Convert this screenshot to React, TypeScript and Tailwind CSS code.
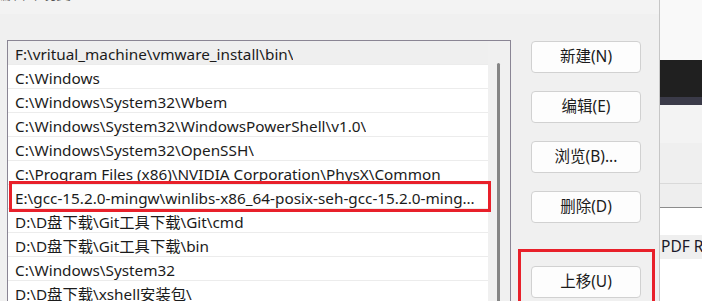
const paths = [
  'F:\\vritual_machine\\vmware_install\\bin\\',
  'C:\\Windows',
  'C:\\Windows\\System32\\Wbem',
  'C:\\Windows\\System32\\WindowsPowerShell\\v1.0\\',
  'C:\\Windows\\System32\\OpenSSH\\',
  'C:\\Program Files (x86)\\NVIDIA Corporation\\PhysX\\Common',
  'E:\\gcc-15.2.0-mingw\\winlibs-x86_64-posix-seh-gcc-15.2.0-mingw-w64msvcrt-r1\\mingw64\\bin',
  'D:\\D盘下载\\Git工具下载\\Git\\cmd',
  'D:\\D盘下载\\Git工具下载\\bin',
  'C:\\Windows\\System32',
  'D:\\D盘下载\\xshell安装包\\',
]

const buttons = ['新建(N)', '编辑(E)', '浏览(B)...', '删除(D)']

export default function App() {
  return (
    <div className="relative flex w-[702px] h-[301px] overflow-hidden bg-white font-['Noto_Sans','Noto_Sans_CJK_SC',sans-serif] text-[#1b1b1b]">

      {/* Dialog */}
      <div className="flex flex-col w-[660px] h-full shrink-0 bg-[#f0f0f0] border-r border-[#c6c6c6]">
        <div className="h-[14px] shrink-0 bg-[#f3f3f3] overflow-hidden flex justify-between">
          <div className="-mt-[18px] -ml-[4px] text-[15px] text-[#555]">编辑环境变量</div>
          <div className="-mt-[16px] mr-[14px] text-[13px] text-[#666]">✕</div>
        </div>

        <div className="flex shrink-0 pl-[7px] pt-[26px] gap-[20px]">
          {/* Path list */}
          <div className="flex w-[504px] h-[300px] border border-[#8a8594] bg-white shrink-0">
            <div className="w-[480px] flex flex-col">
              {paths.map((p, i) => (
                <div
                  key={i}
                  className={`h-[24px] shrink-0 flex items-center pl-[7px] pr-[8px] border-b border-[#ececec] text-[15.3px] whitespace-nowrap ${i === 0 ? 'bg-[#efefef]' : ''}`}
                >
                  <span className="truncate leading-[20px] pt-[2px]">{p}</span>
                </div>
              ))}
            </div>
            <div className="w-[22px] bg-[#f0f0f0] pt-[22px] pl-[9px]">
              <div className="w-[3px] h-full bg-[#858585] rounded-t-full" />
            </div>
          </div>

          {/* Buttons */}
          <div className="flex flex-col w-[110px] pt-[1px]">
            {buttons.map((b) => (
              <div
                key={b}
                className="h-[32px] shrink-0 mb-[18px] flex items-center justify-center rounded-[4px] border border-[#d1d1d1] bg-[#fdfdfd] text-[15.5px]"
              >
                {b}
              </div>
            ))}
            <div className="h-[32px] shrink-0 mt-[25px] flex items-center justify-center rounded-[4px] border border-[#d1d1d1] bg-[#fdfdfd] text-[15.5px]">
              上移(U)
            </div>
          </div>
        </div>
      </div>

      {/* Background window */}
      <div className="flex flex-col flex-1">
        <div className="h-[60px] shrink-0 bg-[#f9f9f9]" />
        <div className="h-[37px] shrink-0 bg-[#202020]" />
        <div className="h-[8px] shrink-0 bg-[#3a3a48]" />
        <div className="h-[38px] shrink-0 bg-[#f3f3f3]" />
        <div className="h-[41px] shrink-0 bg-[#efefef] border-b border-[#d9d9d9]" />
        <div className="h-[24px] shrink-0 bg-[#eeeeee] border-b border-[#8c8c8c]" />
        <div className="h-[27px] shrink-0 bg-white" />
        <div className="h-[24px] shrink-0 bg-[#efefef] flex items-center pl-[1px] text-[15.5px] whitespace-nowrap text-[#1a1a2a]">PDF R</div>
        <div className="flex-1 bg-white" />
      </div>

      {/* Red highlight marks */}
      <div className="absolute left-[9px] top-[181px] w-[482px] h-[31px] border-[3px] border-[#e8202a]" />
      <div className="absolute left-[518px] top-[249px] w-[137px] h-[60px] border-[3px] border-[#e8202a]" />
    </div>
  )
}
